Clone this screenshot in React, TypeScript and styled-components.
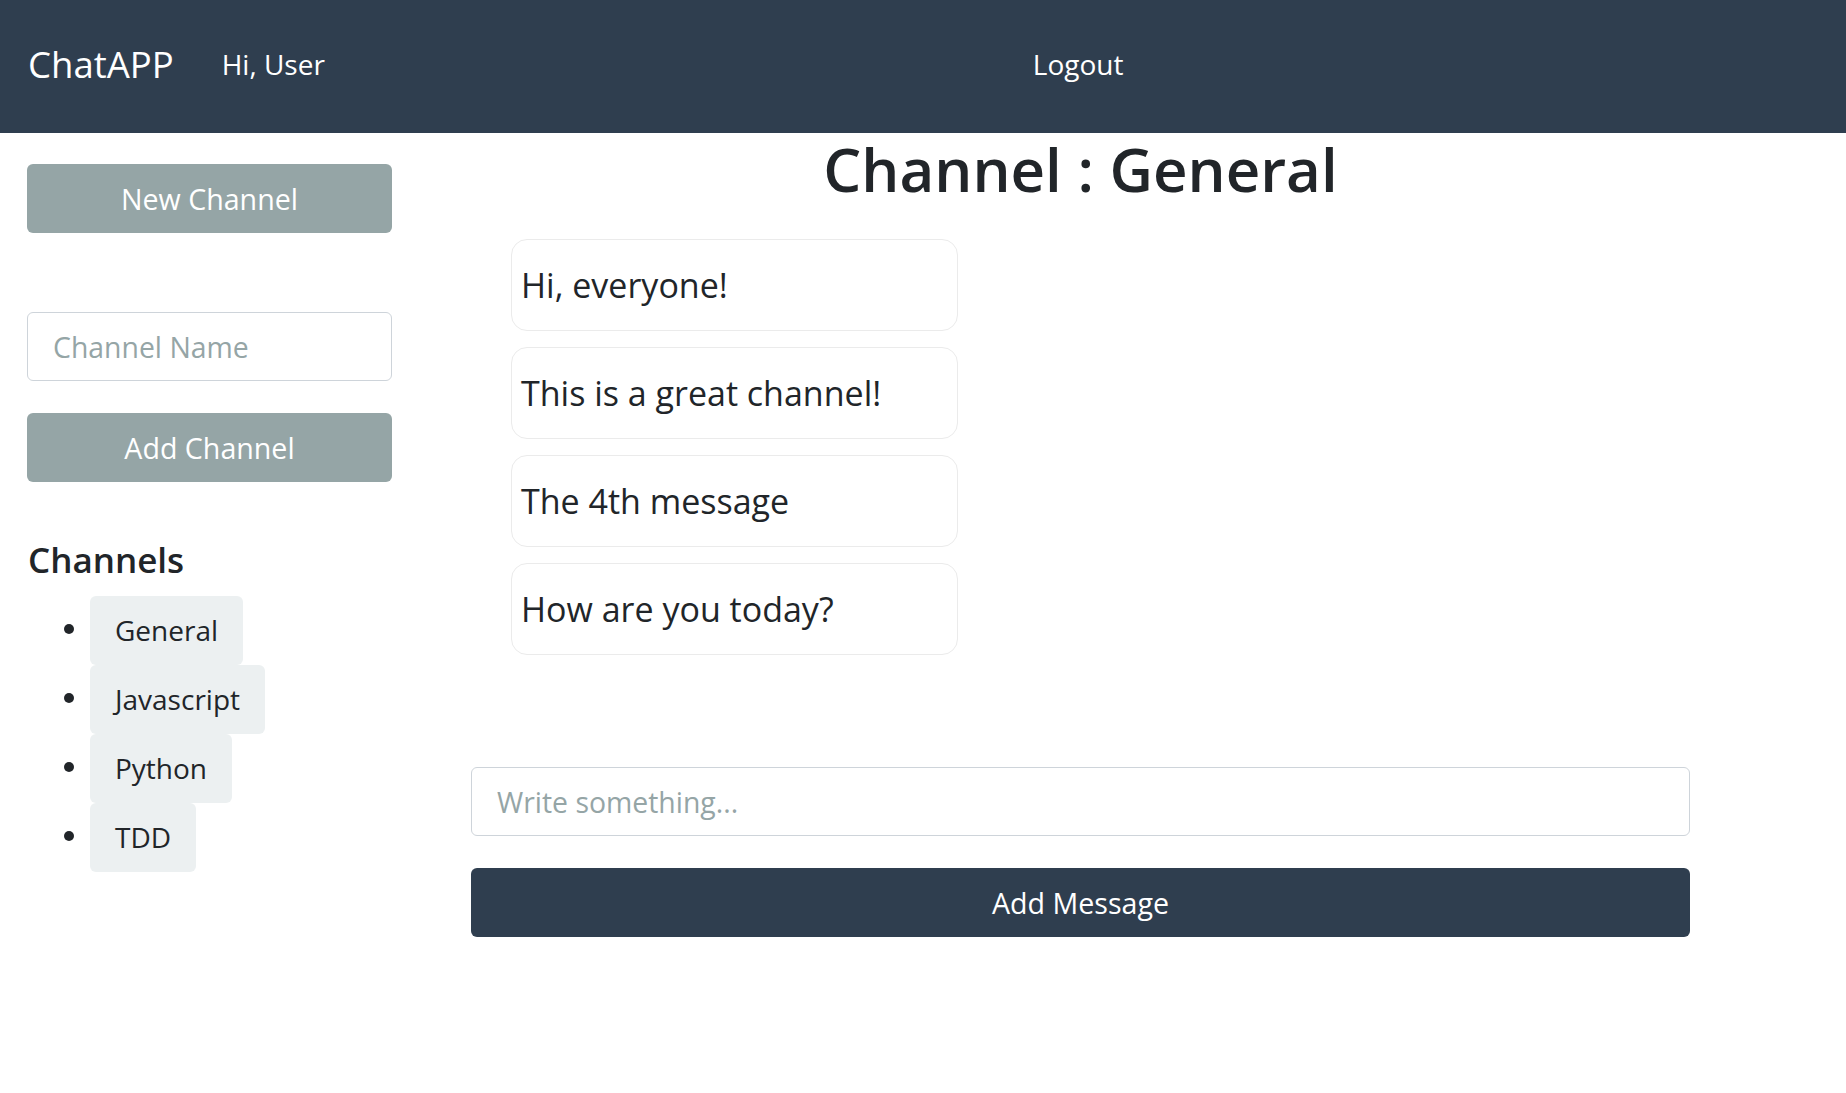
import React from "react";
import styled, { createGlobalStyle } from "styled-components";

const GlobalStyle = createGlobalStyle`
  html, body { margin: 0; padding: 0; background: #ffffff; }
  body { font-family: "Open Sans", "Noto Sans", sans-serif; color: #212529; }
  * { box-sizing: border-box; }
`;

const NavBar = styled.nav`
  height: 133px;
  background: #2f3e4f;
  display: flex;
  align-items: center;
  padding: 0 0 5px 28px;
  color: #ffffff;
`;

const Brand = styled.div`
  font-size: 36.5px;
  line-height: 1;
  color: #ffffff;
`;

const NavLink = styled.a<{ $gap: number }>`
  font-size: 28px;
  color: #ffffff;
  text-decoration: none;
  margin-left: ${(p) => p.$gap}px;
  cursor: pointer;
`;

const Body = styled.div`
  display: flex;
  align-items: flex-start;
`;

const Sidebar = styled.aside`
  width: 392px;
  padding: 31px 0 0 27px;
  display: flex;
  flex-direction: column;
`;

const Button = styled.button<{ $variant: "secondary" | "primary"; $mt?: number }>`
  height: 69px;
  width: 100%;
  border: none;
  border-radius: 6px;
  background: ${(p) => (p.$variant === "primary" ? "#2f3e4f" : "#95a5a6")};
  color: #ffffff;
  font-family: inherit;
  font-size: 28.6px;
  margin-top: ${(p) => p.$mt ?? 0}px;
  cursor: pointer;
`;

const Input = styled.input<{ $mt?: number }>`
  height: 69px;
  width: 100%;
  border: 1.5px solid #ced4da;
  border-radius: 6px;
  padding: 0 25px;
  font-family: inherit;
  font-size: 28.4px;
  color: #212529;
  margin-top: ${(p) => p.$mt ?? 0}px;
  outline: none;
  &::placeholder { color: #95a5a6; }
`;

const SectionTitle = styled.h4`
  margin: 57px 0 0 1px;
  font-size: 35px;
  font-weight: 600;
  line-height: 1.2;
`;

const ChannelList = styled.ul`
  list-style: disc;
  margin: 15px 0 0;
  padding-left: 63px;
  font-size: 28px;
`;

const ChannelItem = styled.li`
  &::marker { font-size: 27px; }
`;

const Pill = styled.span`
  display: inline-block;
  height: 69px;
  line-height: 69px;
  padding: 0 25px;
  background: #ecf0f1;
  border-radius: 6px;
  color: #212529;
  vertical-align: middle;
`;

const Main = styled.main`
  width: 1219px;
  margin-left: 79px;
  display: flex;
  flex-direction: column;
`;

const Title = styled.h1`
  margin: 0;
  text-align: center;
  font-size: 60px;
  font-weight: 600;
  line-height: 72px;
`;

const Messages = styled.div`
  display: flex;
  flex-direction: column;
  gap: 16px;
  margin: 34px 0 0 40px;
`;

const Message = styled.div`
  width: 447px;
  height: 92px;
  border: 1.5px solid #ebebeb;
  border-radius: 16px;
  display: flex;
  align-items: center;
  padding-left: 9px;
  font-size: 34px;
`;

const Composer = styled.form`
  margin-top: 112px;
  display: flex;
  flex-direction: column;
`;

const channels = ["General", "Javascript", "Python", "TDD"];
const messages = [
  "Hi, everyone!",
  "This is a great channel!",
  "The 4th message",
  "How are you today?",
];

export default function App() {
  return (
    <>
      <GlobalStyle />
      <NavBar>
        <Brand>ChatAPP</Brand>
        <NavLink $gap={48}>Hi, User</NavLink>
        <NavLink $gap={708}>Logout</NavLink>
      </NavBar>
      <Body>
        <Sidebar>
          <Button $variant="secondary">New Channel</Button>
          <Input $mt={79} placeholder="Channel Name" />
          <Button $variant="secondary" $mt={32}>Add Channel</Button>
          <SectionTitle>Channels</SectionTitle>
          <ChannelList>
            {channels.map((c) => (
              <ChannelItem key={c}>
                <Pill>{c}</Pill>
              </ChannelItem>
            ))}
          </ChannelList>
        </Sidebar>
        <Main>
          <Title>Channel : General</Title>
          <Messages>
            {messages.map((m) => (
              <Message key={m}>{m}</Message>
            ))}
          </Messages>
          <Composer onSubmit={(e) => e.preventDefault()}>
            <Input placeholder="Write something..." />
            <Button $variant="primary" $mt={32} type="submit">Add Message</Button>
          </Composer>
        </Main>
      </Body>
    </>
  );
}
